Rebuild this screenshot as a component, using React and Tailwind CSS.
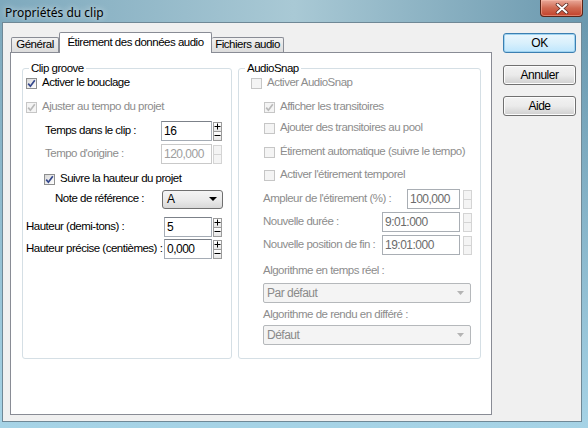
import React from 'react'

const font = "font-['Liberation_Sans',Arial,sans-serif] text-[11.5px] tracking-[-0.5px]"

function Check({ checked, disabled }) {
  return (
    <span
      className={`w-[11px] h-[11px] shrink-0 border flex items-center justify-center ${
        disabled ? 'border-[#c6c6c6] bg-[#f4f4f4]' : 'border-[#8e8f8f] bg-gradient-to-br from-[#d8d8d8] to-white'
      }`}
    >
      {checked && (
        <svg width="9" height="9" viewBox="0 0 9 9">
          <path
            d="M1.2 4.6 L3.4 7.2 L7.8 1.2"
            fill="none"
            stroke={disabled ? '#b9b9b9' : '#34478c'}
            strokeWidth="1.7"
          />
        </svg>
      )}
    </span>
  )
}

function Spinner({ disabled }) {
  const half = disabled
    ? 'h-[10px] border border-[#d4d4d4] bg-[#f4f4f4] flex items-center justify-center'
    : 'h-[10px] border border-[#9c9c9c] bg-gradient-to-b from-white to-[#e6e6e6] flex items-center justify-center'
  return (
    <div className="w-[9px] flex flex-col">
      <div className={half}>
        {!disabled && (
          <svg width="7" height="7" viewBox="0 0 7 7">
            <path d="M0.5 3.5 H6.5 M3.5 0.5 V6.5" stroke="#000" strokeWidth="1" />
          </svg>
        )}
      </div>
      <div className={half + ' -mt-px'}>
        {!disabled && (
          <svg width="7" height="7" viewBox="0 0 7 7">
            <path d="M0.5 3.5 H6.5" stroke="#000" strokeWidth="1" />
          </svg>
        )}
      </div>
    </div>
  )
}

function NumField({ value, width, disabled, dim, gap }) {
  let box = 'border-[#a5acb5] border-t-[#7c8189] text-black bg-white'
  if (disabled) box = 'border-[#c9c9c9] text-[#9d9d9d] bg-white'
  if (dim) box = 'border-[#a9aeb4] text-[#6b6b6b] bg-white'
  return (
    <div className={`flex items-center ${gap}`}>
      <div className={`h-[20px] border flex items-center px-[2px] text-[12px] ${width} ${box}`}>{value}</div>
      <Spinner disabled={disabled || dim} />
    </div>
  )
}

function Combo({ value, width, disabled }) {
  if (disabled) {
    return (
      <div className={`h-[20px] border border-[#b5b8bb] rounded-[2px] bg-[#f4f4f4] flex items-center justify-between pl-[3px] pr-[6px] text-[#8a8a8a] text-[12px] ${width}`}>
        <span>{value}</span>
        <svg width="7" height="4" viewBox="0 0 7 4">
          <path d="M0 0 H7 L3.5 4 Z" fill="#b4b4b4" />
        </svg>
      </div>
    )
  }
  return (
    <div className={`h-[19px] border border-[#707070] rounded-[3px] bg-gradient-to-b from-[#f4f4f4] via-[#ebebeb] to-[#d8d8d8] flex items-center justify-between pl-[4px] pr-[5px] text-[12px] ${width}`}>
      <span>{value}</span>
      <svg width="8" height="4" viewBox="0 0 8 4">
        <path d="M0 0 H8 L4 4 Z" fill="#000" />
      </svg>
    </div>
  )
}

function CheckRow({ label, checked, disabled, indent, extra }) {
  return (
    <div className={`flex items-center ${extra} ${indent}`}>
      <Check checked={checked} disabled={disabled} />
      <span className={`ml-[5px] whitespace-nowrap ${disabled ? 'text-[#8d8d8d]' : 'text-black'}`}>{label}</span>
    </div>
  )
}

function Button({ children, primary, extra }) {
  return (
    <div
      className={`w-[73px] h-[20px] rounded-[3px] border flex items-center justify-center text-[12px] ${extra} ${
        primary
          ? 'border-[#3c7fb1] bg-gradient-to-b from-[#eaf6fd] via-[#d9f0fc] to-[#bee6fd] shadow-[inset_0_0_0_1px_#9fd3f0]'
          : 'border-[#707070] bg-gradient-to-b from-[#f2f2f2] via-[#ebebeb] to-[#cfcfcf] shadow-[inset_0_0_0_1px_#fcfcfc]'
      }`}
    >
      {children}
    </div>
  )
}

export default function App() {
  return (
    <div className={`w-[588px] h-[428px] flex flex-col overflow-hidden bg-gradient-to-r from-[#7ea9bd] via-[#a9c9d5] to-[#6a98ae] ${font}`}>
      {/* barre de titre */}
      <div className="h-[23px] shrink-0 flex items-start justify-between pl-[5px] pr-[5px]">
        <span className="mt-[4px] font-['Noto_Sans',sans-serif] text-[12px] tracking-[0px] text-black [text-shadow:0_0_6px_rgba(255,255,255,0.9)]">
          Propriétés du clip
        </span>
        <div className="w-[43px] h-[17px] rounded-b-[4px] border border-t-0 border-[#5b2518] bg-gradient-to-b from-[#e9a99a] via-[#cf6a52] to-[#c2402a] shadow-[inset_0_0_0_1px_rgba(255,200,180,0.45)] flex items-center justify-center">
          <svg width="14" height="11" viewBox="0 0 14 11">
            <path d="M2.5 1.5 L11.5 9.5 M11.5 1.5 L2.5 9.5" stroke="#5a2a22" strokeWidth="3.6" strokeLinecap="round" />
            <path d="M2.5 1.5 L11.5 9.5 M11.5 1.5 L2.5 9.5" stroke="#ffffff" strokeWidth="2" strokeLinecap="round" />
          </svg>
        </div>
      </div>

      {/* zone client */}
      <div className="flex-1 pl-[3px] pr-[7px] pb-[7px] bg-gradient-to-b from-transparent to-[#a6d3e6]">
        <div className="h-[398px] bg-[#f0f0f0] flex items-start shadow-[0_0_0_1px_#6f8896]">
          <div className="ml-[7px] mt-[9px] w-[482px] flex flex-col">
            {/* onglets */}
            <div className="h-[20px] flex items-end pl-[1px]">
              <div className="w-[48px] h-[15px] border border-b-0 border-[#898c95] rounded-t-[2px] bg-gradient-to-b from-[#f2f2f2] to-[#dcdcdc] flex items-center justify-center">
                Général
              </div>
              <div className="relative z-10 -mb-px w-[153px] h-[21px] border border-b-0 border-[#898c95] rounded-t-[2px] bg-white flex items-center justify-center pb-[1px]">
                Étirement des données audio
              </div>
              <div className="w-[72px] h-[15px] border border-b-0 border-l-0 border-[#898c95] rounded-t-[2px] bg-gradient-to-b from-[#f2f2f2] to-[#dcdcdc] flex items-center justify-center">
                Fichiers audio
              </div>
            </div>

            {/* panneau */}
            <div className="h-[363px] border border-[#898c95] bg-white flex items-start">
              {/* Clip groove */}
              <fieldset className="ml-[11px] mt-[8px] w-[210px] h-[298px] border border-[#d5dfe5] rounded-[3px] px-[3px]">
                <legend className="ml-[3px] px-[2px] leading-[14px]">Clip groove</legend>
                <CheckRow label="Activer le bouclage" checked extra="h-[16px]" indent="" />
                <CheckRow label="Ajuster au tempo du projet" checked disabled extra="h-[20px] mt-[6px]" indent="" />
                <div className="h-[20px] mt-[4px] flex items-center pl-[19px]">
                  <span className="w-[116px] whitespace-nowrap">Temps dans le clip :</span>
                  <NumField value="16" width="w-[51px]" gap="gap-[1px]" />
                </div>
                <div className="h-[20px] mt-[3px] flex items-center pl-[19px]">
                  <span className="w-[116px] whitespace-nowrap text-[#8d8d8d]">Tempo d'origine :</span>
                  <NumField value="120,000" width="w-[51px]" gap="gap-[1px]" disabled />
                </div>
                <CheckRow label="Suivre la hauteur du projet" checked extra="h-[20px] mt-[5px]" indent="pl-[18px]" />
                <div className="h-[20px] flex items-center pl-[29px]">
                  <span className="w-[107px] whitespace-nowrap">Note de référence :</span>
                  <Combo value="A" width="w-[61px]" />
                </div>
                <div className="h-[20px] mt-[8px] flex items-center">
                  <span className="w-[138px] whitespace-nowrap">Hauteur (demi-tons) :</span>
                  <NumField value="5" width="w-[48px]" gap="gap-[1px]" />
                </div>
                <div className="h-[20px] mt-[2px] flex items-center">
                  <span className="w-[138px] whitespace-nowrap">Hauteur précise (centièmes) :</span>
                  <NumField value="0,000" width="w-[48px]" gap="gap-[1px]" />
                </div>
              </fieldset>

              {/* AudioSnap */}
              <fieldset className="ml-[6px] mt-[8px] w-[243px] h-[298px] border border-[#d5dfe5] rounded-[3px] px-[3px] text-[#8d8d8d]">
                <legend className="ml-[3px] px-[2px] leading-[14px] text-black">AudioSnap</legend>
                <CheckRow label="Activer AudioSnap" disabled extra="h-[16px]" indent="pl-[9px]" />
                <CheckRow label="Afficher les transitoires" checked disabled extra="h-[20px] mt-[6px]" indent="pl-[22px]" />
                <CheckRow label="Ajouter des transitoires au pool" disabled extra="h-[20px] mt-[1px]" indent="pl-[22px]" />
                <CheckRow label="Étirement automatique (suivre le tempo)" disabled extra="h-[20px] mt-[4px]" indent="pl-[22px]" />
                <CheckRow label="Activer l'étirement temporel" disabled extra="h-[20px] mt-[3px]" indent="pl-[22px]" />
                <div className="h-[20px] mt-[4px] flex items-center pl-[21px]">
                  <span className="w-[144px] whitespace-nowrap">Ampleur de l'étirement (%) :</span>
                  <NumField value="100,000" width="w-[53px]" gap="gap-[3px]" dim />
                </div>
                <div className="h-[20px] mt-[3px] flex items-center pl-[21px]">
                  <span className="w-[119px] whitespace-nowrap">Nouvelle durée :</span>
                  <NumField value="9:01:000" width="w-[78px]" gap="gap-[3px]" dim />
                </div>
                <div className="h-[20px] mt-[3px] flex items-center pl-[21px]">
                  <span className="w-[119px] whitespace-nowrap">Nouvelle position de fin :</span>
                  <NumField value="19:01:000" width="w-[78px]" gap="gap-[3px]" dim />
                </div>
                <div className="h-[20px] mt-[6px] flex items-center pl-[21px]">Algorithme en temps réel :</div>
                <div className="mt-[2px] pl-[21px]">
                  <Combo value="Par défaut" width="w-[208px]" disabled />
                </div>
                <div className="h-[20px] mt-[2px] flex items-center pl-[21px]">Algorithme de rendu en différé :</div>
                <div className="pl-[21px]">
                  <Combo value="Défaut" width="w-[208px]" disabled />
                </div>
              </fieldset>
            </div>
          </div>

          {/* boutons */}
          <div className="ml-[11px] mt-[10px] flex flex-col">
            <Button primary extra="">OK</Button>
            <Button extra="mt-[12px]">Annuler</Button>
            <Button extra="mt-[11px]">Aide</Button>
          </div>
        </div>
      </div>
    </div>
  )
}
